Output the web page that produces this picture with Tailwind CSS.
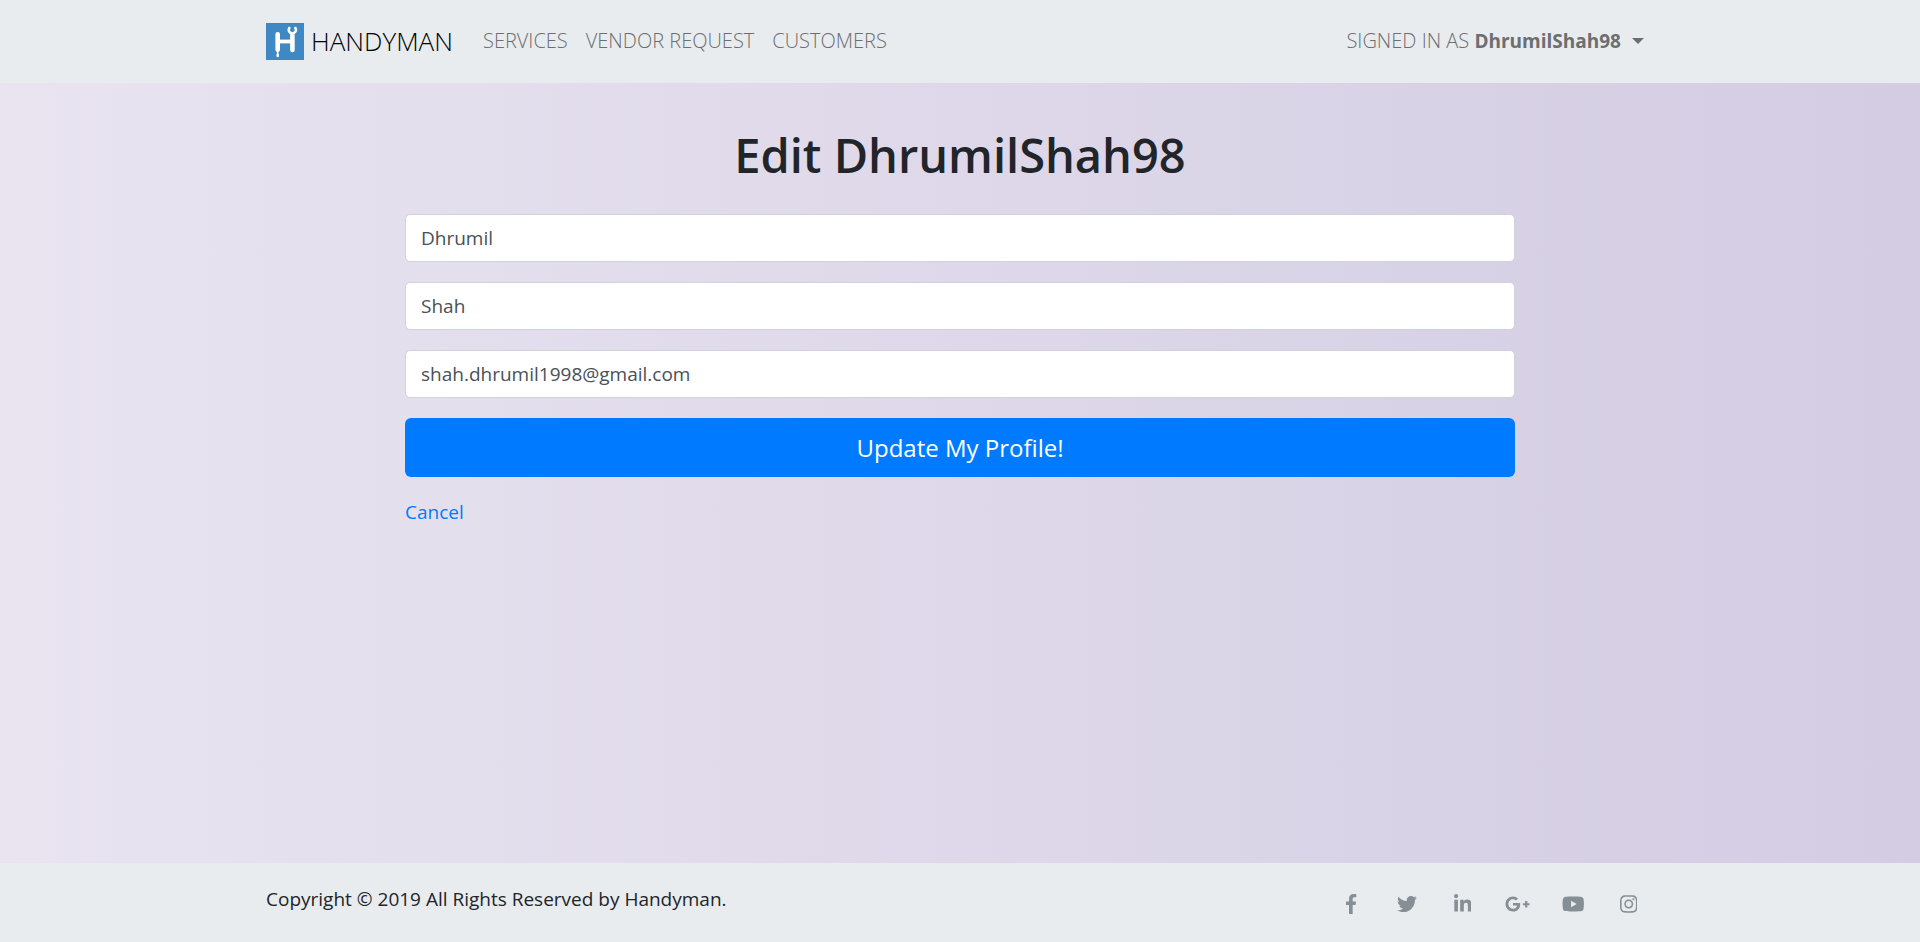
<!DOCTYPE html>
<html lang="en">
<head>
<meta charset="utf-8">
<meta name="viewport" content="width=device-width, initial-scale=1">
<title>Handyman - Edit Profile</title>
<script src="https://cdn.jsdelivr.net/npm/@tailwindcss/browser@4"></script>
</head>
<body class="flex min-h-screen flex-col bg-linear-to-r from-[#e9e4f0] to-[#d3cce3] font-['Open_Sans','Noto_Sans',sans-serif] text-[19px] leading-[30px] text-[#212529]">
  <header class="bg-[#e8ecef]">
    <nav class="mx-auto flex h-[83px] w-full max-w-[1426px] items-center px-[19px] pb-px text-[20px] font-light text-[#6c6e70]">
      <a href="#" class="mr-[30px] flex items-center gap-[7px] text-[26px] text-black">
        <svg class="h-[37px] w-[38px]" viewBox="0 0 38 37" fill="none" stroke="#fff" stroke-linecap="round" aria-hidden="true">
          <path fill="#3e88c3" stroke="none" d="M0 0h38v37H0z"/>
          <path stroke-width="4.6" d="M11.7 11.3v15.4M26.4 12v15"/>
          <path stroke-width="3.8" stroke-linecap="butt" d="M12 18.5h14"/>
          <path stroke-width="1.6" d="M11.7 27v5"/>
          <path stroke-width="2.6" d="M11.7 32v1"/>
          <path stroke-width="2.6" d="M23.3 5c-1.5 2.6.2 5.2 3 5.2s4.600-2.600 3.100-5.200"/>
        </svg>
        <span>HANDYMAN</span>
      </a>
      <ul class="flex gap-[18px]">
        <li><a href="#">SERVICES</a></li>
        <li><a href="#">VENDOR REQUEST</a></li>
        <li><a href="#">CUSTOMERS</a></li>
      </ul>
      <button type="button" class="ml-auto mr-[10px] flex items-center">
        <span>SIGNED IN AS <b class="text-[19px] font-bold">DhrumilShah98</b></span>
        <svg class="ml-[11px] h-[6px] w-3" viewBox="0 0 12 6" fill="currentColor" aria-hidden="true"><path d="M0 0h12L6 6z"/></svg>
      </button>
    </nav>
  </header>

  <main class="mx-auto w-full max-w-[1148px] flex-1 px-[19px]">
    <h1 class="mt-[42px] mb-[29px] text-center text-[47px] leading-[60px] font-semibold">Edit DhrumilShah98</h1>
    <form class="flex flex-col gap-5">
      <input type="text" aria-label="First name" value="Dhrumil" class="h-12 w-full rounded-[5px] border border-[#ced4da] bg-white px-[15px] text-[#495057]">
      <input type="text" aria-label="Last name" value="Shah" class="h-12 w-full rounded-[5px] border border-[#ced4da] bg-white px-[15px] text-[#495057]">
      <input type="email" aria-label="Email" value="shah.dhrumil1998@gmail.com" class="h-12 w-full rounded-[5px] border border-[#ced4da] bg-white px-[15px] text-[#495057]">
      <button type="submit" class="h-[59px] w-full rounded-md bg-[#007bff] text-[24px] text-white">Update My Profile!</button>
    </form>
    <a href="#" class="mt-5 inline-block text-[#007bff]">Cancel</a>
  </main>

  <footer class="bg-[#e8ecef]">
    <div class="mx-auto flex h-[79px] w-full max-w-[1426px] justify-between px-[19px] pt-[21px]">
      <p>Copyright © 2019 All Rights Reserved by Handyman.</p>
      <ul class="mr-2 flex h-10 w-[312px] items-center justify-between text-[#868e96]">
        <li><a href="#" aria-label="Facebook" class="flex w-[35px] justify-center"><svg class="h-5" viewBox="0 0 264 512" fill="currentColor"><path d="M76.7 512V283H0v-91h76.700v-71.700C76.700 42.400 124.300 0 193.800 0c33.300 0 61.900 2.500 70.200 3.600V85h-48.200c-37.800 0-45.100 18-45.100 44.300V192H256l-11.700 91h-73.600v229"/></svg></a></li>
        <li><a href="#" aria-label="Twitter" class="flex w-[35px] justify-center"><svg class="h-5" viewBox="0 0 512 512" fill="currentColor"><path d="M459.370 151.716c.325 4.548.325 9.097.325 13.645 0 138.720-105.583 298.558-298.558 298.558-59.452 0-114.680-17.219-161.137-47.106 8.447.974 16.568 1.299 25.340 1.299 49.055 0 94.213-16.568 130.274-44.832-46.132-.975-84.792-31.188-98.112-72.772 6.498.974 12.995 1.624 19.818 1.624 9.421 0 18.843-1.300 27.614-3.573-48.081-9.747-84.143-51.980-84.143-102.985v-1.299c13.969 7.797 30.214 12.670 47.431 13.319-28.264-18.843-46.781-51.005-46.781-87.391 0-19.492 5.197-37.360 14.294-52.954 51.655 63.675 129.300 105.258 216.365 109.807-1.624-7.797-2.599-15.918-2.599-24.040 0-57.828 46.782-104.934 104.934-104.934 30.213 0 57.502 12.670 76.670 33.137 23.715-4.548 46.456-13.320 66.599-25.340-7.798 24.366-24.366 44.833-46.132 57.827 21.117-2.273 41.584-8.122 60.426-16.243-14.292 20.791-32.161 39.308-52.628 54.253z"/></svg></a></li>
        <li><a href="#" aria-label="LinkedIn" class="flex w-[35px] justify-center"><svg class="h-5" viewBox="0 0 448 512" fill="currentColor"><path d="M100.280 448H7.400V148.900h92.880zM53.790 108.100C24.090 108.100 0 83.500 0 53.800a53.790 53.790 0 0 1 107.580 0c0 29.700-24.100 54.300-53.790 54.300zM447.900 448h-92.680V302.400c0-34.700-.700-79.200-48.290-79.200-48.290 0-55.690 37.700-55.690 76.700V448h-92.780V148.900h89.080v40.800h1.300c12.400-23.500 42.690-48.300 87.880-48.300 94 0 111.280 61.900 111.280 142.300V448z"/></svg></a></li>
        <li><a href="#" aria-label="Google Plus" class="flex w-[35px] justify-center"><svg class="h-5" viewBox="0 0 640 512" fill="currentColor"><path d="M386.061 228.496c1.834 9.692 3.143 19.384 3.143 31.956C389.204 370.205 315.599 448 204.800 448c-106.084 0-192-85.915-192-192s85.916-192 192-192c51.864 0 95.083 18.859 128.611 50.292l-52.126 50.030c-14.145-13.621-39.028-29.599-76.485-29.599-65.484 0-118.920 54.221-118.920 121.277 0 67.056 53.436 121.277 118.920 121.277 75.961 0 104.513-54.745 108.965-82.773H204.800v-66.009h181.261zm185.406 6.437V179.200h-56.001v55.733h-55.733v56.001h55.733v55.733h56.001v-55.733H627.200v-56.001h-55.733z"/></svg></a></li>
        <li><a href="#" aria-label="YouTube" class="flex w-[35px] justify-center"><svg class="h-5" viewBox="0 0 576 512" fill="currentColor"><path d="M549.655 124.083c-6.281-23.650-24.787-42.276-48.284-48.597C458.781 64 288 64 288 64S117.220 64 74.629 75.486c-23.497 6.322-42.003 24.947-48.284 48.597-11.412 42.867-11.412 132.305-11.412 132.305s0 89.438 11.412 132.305c6.281 23.650 24.787 41.500 48.284 47.821C117.220 448 288 448 288 448s170.780 0 213.371-11.486c23.497-6.321 42.003-24.171 48.284-47.821 11.412-42.867 11.412-132.305 11.412-132.305s0-89.438-11.412-132.305zm-317.510 213.508V175.185l142.739 81.205-142.739 81.201z"/></svg></a></li>
        <li><a href="#" aria-label="Instagram" class="flex w-[35px] justify-center"><svg class="h-5" viewBox="0 0 448 512" fill="currentColor"><path d="M224.100 141c-63.600 0-114.900 51.300-114.900 114.900s51.300 114.900 114.900 114.900S339 319.500 339 255.900 287.700 141 224.100 141zm0 189.600c-41.100 0-74.700-33.500-74.700-74.700s33.500-74.700 74.700-74.700 74.700 33.500 74.700 74.700-33.600 74.700-74.700 74.700zm146.400-194.300c0 14.900-12 26.800-26.800 26.800-14.900 0-26.800-12-26.800-26.800s12-26.800 26.800-26.800 26.800 12 26.800 26.800zm76.100 27.200c-1.700-35.900-9.900-67.700-36.200-93.900-26.200-26.200-58-34.400-93.900-36.200-37-2.100-147.900-2.100-184.900 0-35.800 1.700-67.600 9.900-93.900 36.100s-34.400 58-36.200 93.900c-2.100 37-2.100 147.900 0 184.900 1.700 35.900 9.900 67.700 36.200 93.900s58 34.400 93.900 36.200c37 2.100 147.900 2.100 184.900 0 35.900-1.700 67.700-9.900 93.900-36.200 26.200-26.200 34.400-58 36.200-93.900 2.100-37 2.100-147.800 0-184.800zM398.800 388c-7.800 19.600-22.900 34.700-42.600 42.600-29.500 11.700-99.500 9-132.100 9s-102.700 2.600-132.100-9c-19.600-7.800-34.700-22.900-42.600-42.600-11.700-29.500-9-99.500-9-132.100s-2.600-102.700 9-132.100c7.800-19.600 22.900-34.700 42.600-42.600 29.500-11.700 99.500-9 132.100-9s102.700-2.600 132.100 9c19.600 7.800 34.700 22.900 42.600 42.600 11.700 29.500 9 99.500 9 132.100s2.700 102.700-9 132.100z"/></svg></a></li>
      </ul>
    </div>
  </footer>
</body>
</html>
